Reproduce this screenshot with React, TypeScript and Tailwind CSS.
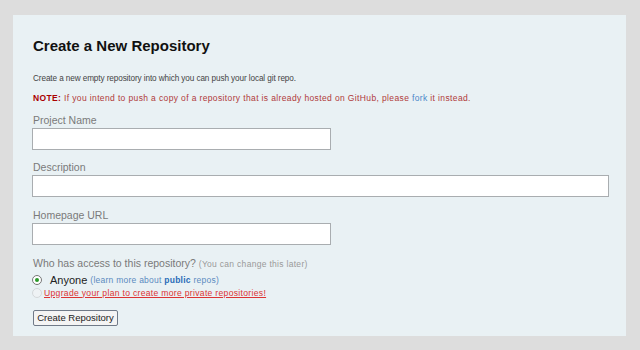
import React from 'react'

const font = { fontFamily: '"Liberation Sans", Arial, sans-serif' }

const Field: React.FC<{ label: string; wide?: boolean; top: string }> = ({ label, wide, top }) => (
  <div className={top}>
    <div className="text-[10.5px] leading-[13px] text-[#7a7a7a] pl-[1px]">{label}</div>
    <input
      className={`mt-[1px] block h-[22px] border border-[#a9adb0] bg-white ${wide ? 'w-[577px]' : 'w-[299px]'}`}
    />
  </div>
)

export default function App() {
  return (
    <div className="w-[640px] h-[350px] bg-[#dddddd] pt-[15px] pl-[13px]" style={font}>
      <div className="w-[613px] h-[321px] bg-[#e9f1f4] pl-[19px] pt-[22px]">
        <h1 className="text-[15px] leading-[18px] font-bold text-[#111] pl-[1px]">Create a New Repository</h1>
        <p className="mt-[19px] text-[8.2px] leading-[10px] text-[#444] pl-[1px] tracking-[-0.1px]">
          Create a new empty repository into which you can push your local git repo.
        </p>
        <p className="mt-[9px] text-[8.5px] leading-[10px] text-[#b03a3a] pl-[1px] tracking-[0.37px]">
          <span className="font-bold text-[#a00]">NOTE:</span> If you intend to push a copy of a repository that is already hosted on GitHub, please{' '}
          <span className="text-[#4a86c8]">fork</span> it instead.
        </p>
        <Field label="Project Name" top="mt-[11px]" />
        <Field label="Description" wide top="mt-[11px]" />
        <Field label="Homepage URL" top="mt-[12px]" />
        <div className="mt-[12px] text-[10.5px] leading-[13px] text-[#7a7a7a] pl-[1px]">
          Who has access to this repository?{' '}
          <span className="text-[8.5px] tracking-[0.3px] text-[#999]">(You can change this later)</span>
        </div>
        <div className="flex items-center mt-[3px] h-[12px]">
          <span className="w-[10px] h-[10px] rounded-full border border-[#777] bg-white flex items-center justify-center">
            <span className="w-[4px] h-[4px] rounded-full bg-[#2a9a2a]" />
          </span>
          <span className="ml-[8px] text-[11px] text-[#222]">Anyone</span>
          <span className="ml-[3px] text-[8.5px] tracking-[0.25px] text-[#5a8ac0]">
            (learn more about <b className="text-[#2a6cb8]">public</b> repos)
          </span>
        </div>
        <div className="flex items-center mt-[1px] h-[12px]">
          <span className="w-[10px] h-[10px] rounded-full border border-[#d4d8da] bg-[#eef2f4]" />
          <span className="ml-[2px] text-[8.6px] tracking-[0.3px] text-[#d33] underline">
            Upgrade your plan to create more private repositories!
          </span>
        </div>
        <button className="mt-[11px] ml-[1px] h-[16px] w-[85px] text-[9.5px] leading-[14px] text-[#222] bg-[#f4f4f4] border border-[#707a88] rounded-[2px]">
          Create Repository
        </button>
      </div>
    </div>
  )
}
